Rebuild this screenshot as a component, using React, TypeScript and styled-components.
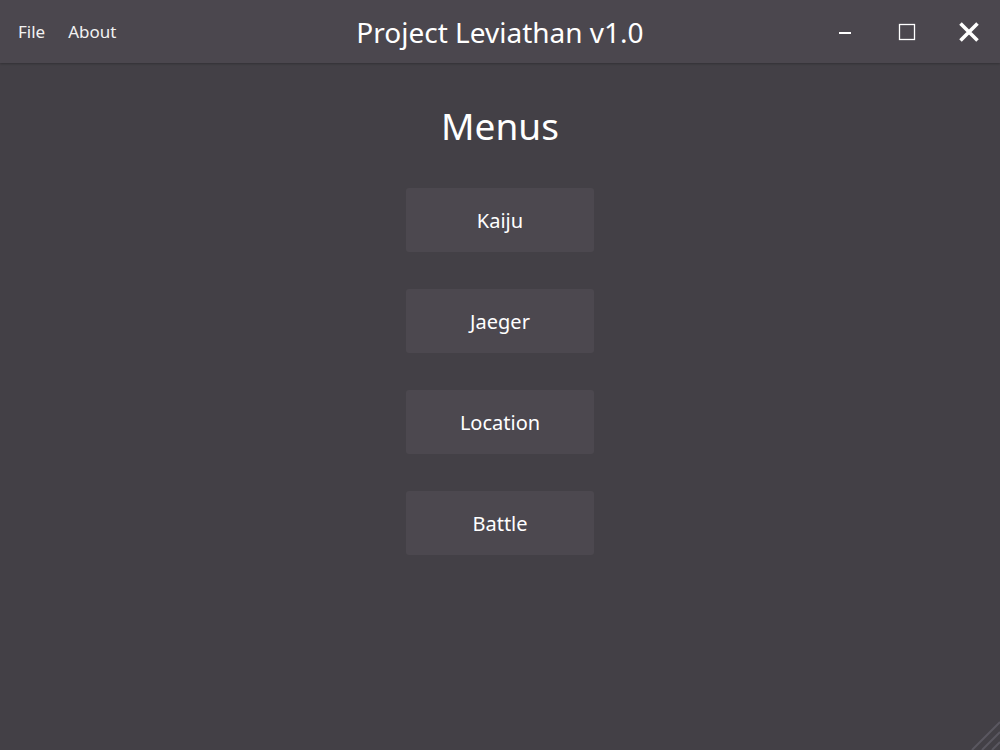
import styled, { createGlobalStyle } from 'styled-components';

const GlobalStyle = createGlobalStyle`
  html, body {
    margin: 0;
    padding: 0;
    height: 100%;
    background: #434046;
  }
  #root {
    height: 100%;
  }
  * {
    box-sizing: border-box;
  }
`;

const menuItems = ['Kaiju', 'Jaeger', 'Location', 'Battle'];

const App = () => {
  return (
    <>
      <GlobalStyle />
      <Window>
        <TitleBar>
          <MenuBar>
            <MenuItem>File</MenuItem>
            <MenuItem>About</MenuItem>
          </MenuBar>
          <Title>Project Leviathan v1.0</Title>
          <WindowControls>
            <ControlButton type='button' aria-label='Minimize'>
              <svg width='14' height='14' viewBox='0 0 14 14'>
                <line x1='1' y1='8' x2='13' y2='8' stroke='#fff' strokeWidth='2' />
              </svg>
            </ControlButton>
            <ControlButton type='button' aria-label='Maximize'>
              <svg width='18' height='18' viewBox='0 0 18 18'>
                <rect x='1.5' y='1.5' width='15' height='15' fill='none' stroke='#fff' strokeWidth='1.3' />
              </svg>
            </ControlButton>
            <ControlButton type='button' aria-label='Close'>
              <svg width='22' height='22' viewBox='0 0 22 22'>
                <path d='M2.5 2.5 L19.5 19.5 M19.5 2.5 L2.5 19.5' stroke='#fff' strokeWidth='3.6' strokeLinecap='butt' />
              </svg>
            </ControlButton>
          </WindowControls>
        </TitleBar>
        <Content>
          <Heading>Menus</Heading>
          <ButtonList>
            {menuItems.map((item) => (
              <MenuButton key={item} type='button'>
                {item}
              </MenuButton>
            ))}
          </ButtonList>
        </Content>
        <ResizeGrip width='34' height='34' viewBox='0 0 34 34'>
          <path d='M34 6 L6 34 M34 16 L16 34 M34 26 L26 34' stroke='#5a5760' strokeWidth='2' />
        </ResizeGrip>
      </Window>
    </>
  );
};

const Window = styled.div`
  position: relative;
  display: flex;
  flex-direction: column;
  height: 100vh;
  overflow: hidden;
  background: #434046;
  color: #ffffff;
  font-family: 'Noto Sans', 'Open Sans', sans-serif;
`;

const TitleBar = styled.header`
  position: relative;
  display: flex;
  align-items: center;
  justify-content: space-between;
  height: 63px;
  flex-shrink: 0;
  background: #4b474e;
  box-shadow: 0 1px 2px rgba(0, 0, 0, 0.25);
`;

const MenuBar = styled.nav`
  display: flex;
  align-items: center;
  gap: 23px;
  padding-left: 18px;
`;

const MenuItem = styled.span`
  font-size: 17px;
  color: #f2f2f2;
  cursor: default;
`;

const Title = styled.h1`
  position: absolute;
  left: 50%;
  top: 50%;
  transform: translate(-50%, -50%);
  margin: 0;
  font-size: 28px;
  font-weight: 400;
  white-space: nowrap;
`;

const WindowControls = styled.div`
  display: flex;
  height: 100%;
`;

const ControlButton = styled.button`
  display: flex;
  align-items: center;
  justify-content: center;
  width: 62px;
  height: 100%;
  border: none;
  padding: 0;
  background: transparent;
`;

const Content = styled.main`
  display: flex;
  flex-direction: column;
  align-items: center;
  padding-top: 38px;
`;

const Heading = styled.h2`
  margin: 0;
  font-size: 37px;
  font-weight: 400;
  line-height: 50px;
`;

const ButtonList = styled.div`
  display: flex;
  flex-direction: column;
  gap: 37px;
  margin-top: 37px;
`;

const MenuButton = styled.button`
  width: 188px;
  height: 64px;
  border: none;
  border-radius: 3px;
  background: #4c484f;
  color: #ffffff;
  font-family: inherit;
  font-size: 20px;
`;

const ResizeGrip = styled.svg`
  position: absolute;
  right: 0;
  bottom: 0;
`;

export default App;
